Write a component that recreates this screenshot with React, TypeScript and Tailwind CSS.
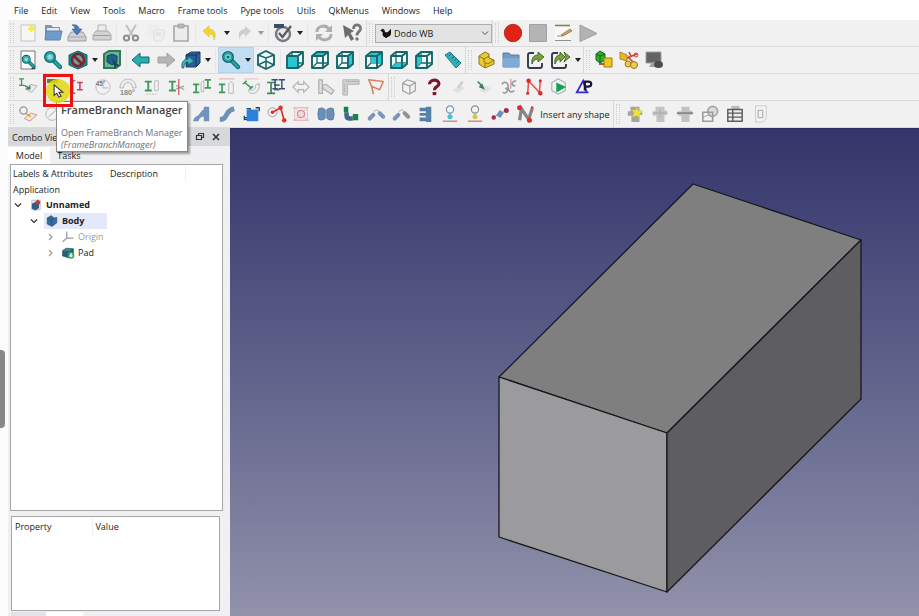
import { Fragment, type ReactNode } from "react";

const TEAL = "#14686a";
const CYAN = "#2cc3d2";

function Svg({ children, size = "size-5" }: { children: ReactNode; size?: string }) {
  return (
    <svg viewBox="0 0 20 20" className={`${size} shrink-0 overflow-visible`} fill="none" aria-hidden="true">
      {children}
    </svg>
  );
}

const cubeFaces: Record<string, string> = {
  front: "M2 6H13V18H2Z",
  top: "M2 6L7 2H18L13 6Z",
  right: "M13 6L18 2V14L13 18Z",
  rear: "M7 2H18V14H7Z",
  bottom: "M2 18L7 13H18L13 18Z",
  left: "M2 6L7 2V13L2 18Z",
};

function Cube({ face }: { face: string }) {
  return (
    <Svg>
      <path d="M2 6L7 2H18V14L13 18H2Z" fill="#f4fbfb" />
      <path d="M7 2V13L2 18M7 13H18" stroke={TEAL} strokeWidth="1.3" />
      <path d={cubeFaces[face]} fill={CYAN} />
      <path d="M2 6L7 2H18V14L13 18H2ZM2 6H13V18M13 6L18 2" stroke={TEAL} strokeWidth="1.9" strokeLinejoin="round" />
    </Svg>
  );
}

function Magnifier({ x = 0, y = 0, s = 1 }: { x?: number; y?: number; s?: number }) {
  return (
    <g transform={`translate(${x} ${y}) scale(${s})`}>
      <path d="M10 10L17 17" stroke={TEAL} strokeWidth="4.5" strokeLinecap="round" />
      <path d="M10 10L17 17" stroke="#1fa3a8" strokeWidth="2.5" strokeLinecap="round" />
      <circle cx="7" cy="7" r="5.2" fill="#8ed6da" stroke={TEAL} strokeWidth="1.6" />
      <circle cx="7" cy="7" r="3.6" stroke="#1fa3a8" strokeWidth="1.6" />
    </g>
  );
}

function Beam({ x, y, c = "#3e9a5c", s = 1 }: { x: number; y: number; c?: string; s?: number }) {
  return (
    <path transform={`translate(${x} ${y}) scale(${s})`} d="M0 0H7M3.5 0V9M0 9H7" stroke={c} strokeWidth="1.9" />
  );
}

const icons: Record<string, ReactNode> = {
  New: (
    <Svg>
      <path d="M3 2H17V18H3Z" fill="#f6f6f4" stroke="#c2c2c0" />
      <path d="M13 1L14.3 3.7L18 3L15.8 5.5L18 8L14.5 7.4L13 10L12 7L9 6L11.6 4.5Z" fill="#f3ee3c" />
    </Svg>
  ),
  Open: (
    <Svg>
      <path d="M2 2H8L10 4H17V15H2Z" fill="#7f95ad" />
      <path d="M4 5H16V8H4Z" fill="#e6eaee" />
      <path d="M3 8H19L17 17H2Z" fill="#6f9bcc" stroke="#5b84b2" />
    </Svg>
  ),
  Save: (
    <Svg>
      <path d="M4 9H16L19 14V18H1V14Z" fill="#d0d2d4" stroke="#9a9da1" />
      <path d="M2 14H18" stroke="#a5a8ac" />
      <path d="M5 2C9 1 12 3 12 6H15L10 12L5 6H8C8 4 7 3 5 2Z" fill="#4d78b4" stroke="#335a90" strokeWidth=".6" />
    </Svg>
  ),
  Print: (
    <Svg>
      <path d="M6 2H14V9H6Z" fill="#ededed" stroke="#b5b5b5" />
      <path d="M4 8H16L19 12V17H1V12Z" fill="#d2d2d2" stroke="#a9a9a9" />
      <path d="M2 12.5H18" stroke="#9d9d9d" />
    </Svg>
  ),
  Cut: (
    <Svg>
      <path d="M5 2L12 13M15 2L8 13" stroke="#c0c0c0" strokeWidth="2" />
      <circle cx="5.500" cy="15" r="2.600" stroke="#8e8e8e" strokeWidth="2" />
      <circle cx="14.500" cy="15" r="2.600" stroke="#8e8e8e" strokeWidth="2" />
    </Svg>
  ),
  Copy: (
    <Svg>
      <path d="M3 3H13V14H3Z" fill="#eeeeee" stroke="#ebebeb" />
      <path d="M8 7H18V14L15 18H8Z" fill="#efefef" stroke="#dedede" />
      <path d="M10 10H15M10 12H15" stroke="#dadada" />
    </Svg>
  ),
  Paste: (
    <Svg>
      <path d="M3 3H17V18H3Z" fill="#ececec" stroke="#a8a8a8" strokeWidth="1.6" />
      <path d="M7 1H13V5H7Z" fill="#b9b9b9" stroke="#999" strokeWidth=".7" />
    </Svg>
  ),
  Undo: (
    <Svg>
      <path d="M3 8L9 3V6C14 6 17 10 14 17C14 12 12 11 9 11V14Z" fill="#edd735" stroke="#d7bd29" strokeWidth=".6" />
    </Svg>
  ),
  Redo: (
    <Svg>
      <path d="M17 8L11 3V6C6 6 3 10 6 17C6 12 8 11 11 11V14Z" fill="#cfcfcf" />
    </Svg>
  ),
  "Edit mode": (
    <Svg>
      <circle cx="10" cy="11" r="7" fill="#e9e9e9" stroke="#777b80" strokeWidth="2.4" />
      <path d="M1 1H11V5H1Z" fill="#3a4b70" />
      <path d="M6 10L9.5 14L18 3" stroke="#555a60" strokeWidth="2.2" />
    </Svg>
  ),
  Refresh: (
    <Svg>
      <path d="M3 9C3 3 11 1 15 6M17 11C17 17 9 19 5 14" stroke="#aeaeae" strokeWidth="3" />
      <path d="M18 2V9H11ZM2 18V11H9Z" fill="#aeaeae" />
    </Svg>
  ),
  "What's this": (
    <Svg>
      <path d="M1 2L12 8L8.500 10L12 16L9 18L6 12L3 15Z" fill="#6c6c6c" />
      <path d="M11.500 6C11.500 0 19 1 18.500 6C18 9 15 8.500 15 12.500" stroke="#777" strokeWidth="2.8" />
      <circle cx="15" cy="16" r="1.700" fill="#777" />
    </Svg>
  ),
  Record: (
    <Svg>
      <circle cx="10" cy="10" r="8.700" fill="#e02416" stroke="#a51c12" strokeWidth=".8" />
    </Svg>
  ),
  Stop: (
    <Svg>
      <path d="M1.500 1.500H18.500V18.500H1.500Z" fill="#b4b4b4" stroke="#a2a2a2" />
    </Svg>
  ),
  Macros: (
    <Svg>
      <path d="M2 2H17V17H2Z" fill="#f8f8f6" />
      <path d="M2 2.500H17" stroke="#7e8543" strokeWidth="1.600" />
      <path d="M2 17.500H18M4 13H9" stroke="#929292" />
      <path d="M8 12L17 6L19 8L10 13Z" fill="#cfa35a" stroke="#6d5b40" strokeWidth=".6" />
    </Svg>
  ),
  Execute: (
    <Svg>
      <path d="M2 2L19 10.500L2 18.500Z" fill="#b3b3b3" stroke="#9c9c9c" />
    </Svg>
  ),
  "Fit all": (
    <Svg>
      <path d="M3 1H17V19H3Z" fill="#fafafa" stroke="#777" />
      <path d="M13 19L17 15V19Z" fill="#333" />
      <Magnifier x={3} y={4} s={0.75} />
    </Svg>
  ),
  "Fit selection": (
    <Svg>
      <Magnifier />
    </Svg>
  ),
  "Draw style": (
    <Svg>
      <path d="M10 1L19 5V15L10 19L1 15V5Z" fill="#16868a" stroke={TEAL} />
      <circle cx="10" cy="10" r="6" fill="#7e9798" stroke="#7d2630" strokeWidth="2.600" />
      <path d="M6 6L14 14" stroke="#7d2630" strokeWidth="2.600" />
    </Svg>
  ),
  "Box selection": (
    <Svg>
      <path d="M2 4L7 1H18V15L14 18H2Z" fill="#6eb49a" stroke="#2d7b51" strokeWidth="2" />
      <path d="M5 6L10 4L15 6V12L10 15L5 12Z" fill="#1c6189" stroke="#174b62" />
      <path d="M10 9L18 16L14.500 16L13 19Z" fill="#214458" />
    </Svg>
  ),
  Back: (
    <Svg>
      <path d="M1 10L9 3V7H18V13H9V17Z" fill="#24aeb4" stroke={TEAL} />
    </Svg>
  ),
  Forward: (
    <Svg>
      <path d="M19 10L11 3V7H2V13H11V17Z" fill="#b5b5b5" stroke="#a2a2a2" />
    </Svg>
  ),
  "Linked object": (
    <Svg>
      <path d="M5 5L10 2H19V13L15 17H5Z" fill="#285f9e" stroke="#243d5e" />
      <path d="M5 5H15V16M15 5L19 2" stroke="#173553" />
      <path d="M1 18C0 12 3 9 7 9V6L13 11L7 15V12C4 12 3 14 3 18Z" fill="#43b4c2" stroke="#174b62" strokeWidth=".7" />
    </Svg>
  ),
  Zoom: (
    <Svg>
      <Magnifier />
      <circle cx="7" cy="7" r="1.500" fill={TEAL} />
    </Svg>
  ),
  Isometric: (
    <Svg>
      <path d="M10 1L18 5V15L10 19L2 15V5Z" fill="#f4fbfb" stroke={TEAL} strokeWidth="1.900" />
      <path d="M2 5L10 8L18 5M10 8V19M2 15L10 11L18 15" stroke={TEAL} strokeWidth="1.500" />
    </Svg>
  ),
  Front: <Cube face="front" />,
  Top: <Cube face="top" />,
  Right: <Cube face="right" />,
  Rear: <Cube face="rear" />,
  Bottom: <Cube face="bottom" />,
  Left: <Cube face="left" />,
  Measure: (
    <Svg>
      <path d="M2 5L7 2L18 13L13 18Z" fill="#35aebc" stroke="#1c7b86" />
      <path d="M8 4L6 6M11 6.500L8.500 8.500M13.500 8.500L11.500 10.500M16 11L13.500 13.500" stroke="#155c66" />
    </Svg>
  ),
  Part: (
    <Svg>
      <path d="M3 6L9 2L13 4V8L18 10V14L9 18L3 14Z" fill="#ecc92c" stroke="#8b741a" />
      <path d="M3 6L8 9V12L12 14L18 10M8 9L13 6M9 18V13" stroke="#8b741a" />
    </Svg>
  ),
  Group: (
    <Svg>
      <path d="M2 3H8L10 5H18V17H2Z" fill="#7799be" stroke="#5f7e9f" />
      <path d="M2 8H18V17H2Z" fill="#7ea9d8" />
    </Svg>
  ),
  "Make link": (
    <Svg>
      <path d="M8 3H4Q2 3 2 5V16Q2 18 4 18H14Q16 18 16 16V13" stroke="#2e3b48" strokeWidth="1.900" />
      <path d="M6 14C5 8 8 5 12 5V2L18 7L12 12V9C9 9 7 11 6 14Z" fill="#77a43c" stroke="#35531c" strokeWidth=".8" />
    </Svg>
  ),
  "Make sublink": (
    <Svg>
      <path d="M7 3H3Q1 3 1 5V16Q1 18 3 18H13Q15 18 15 16V14" stroke="#2e3b48" strokeWidth="1.900" />
      <path d="M4 14C3 8 6 5 9 5V2L14 7L9 12V9C7 9 5 11 4 14ZM13 2L19 7L13 12L15 7Z" fill="#77a43c" stroke="#35531c" strokeWidth=".8" />
    </Svg>
  ),
  "Align view": (
    <Svg>
      <path d="M2 4L6 1L11 4V10L6 13L2 10Z" fill="#2bb02d" stroke="#156218" />
      <path d="M2 4L6 6L11 4M6 6V13" stroke="#156218" />
      <path d="M10 8H18V17H10Z" fill="#efc71e" stroke="#a47d10" />
      <path d="M5 14H10" stroke="#b52a1d" strokeWidth="1.600" />
    </Svg>
  ),
  "Toggle part": (
    <Svg>
      <path d="M1 2L8 5L8 11L1 9Z" fill="#e4b82c" stroke="#b78818" />
      <path d="M8 8L18 4M9 7L16 14M10 2L12 6" stroke="#c9443a" strokeWidth="1.600" />
      <circle cx="9" cy="14" r="3" fill="#e8ca54" stroke="#a27618" />
      <circle cx="15" cy="15" r="3.500" fill="#e8ca54" stroke="#a27618" />
      <circle cx="17" cy="5" r="2" stroke="#c9443a" />
    </Svg>
  ),
  Screen: (
    <Svg>
      <path d="M2 2H17V13H2Z" fill="#636363" stroke="#a0a0a0" />
      <path d="M5 17L8 12H12L13 17Z" fill="#a0a0a0" />
      <ellipse cx="14.500" cy="14.500" rx="4.500" ry="3.500" fill="#4e4e4e" />
    </Svg>
  ),
  "Insert path": (
    <Svg size="size-[18px]">
      <Beam x={0} y={1} s={0.8} />
      <path d="M7 12L13 7L20 9L14 16Z" fill="#ececec" stroke="#a9a9a9" />
      <path d="M6 8L12 12M12 8.500V12H8" stroke="#357a48" strokeWidth="1.500" />
    </Svg>
  ),
  "FrameBranch Manager": (
    <Svg>
      <path d="M4 2H15V6H4Z" fill="#6a7c45" />
    </Svg>
  ),
  "Fill frame": (
    <Svg size="size-[18px]">
      <path d="M7 3H4V17H7" stroke="#6670b5" strokeWidth="1.800" />
      <Beam x={9} y={5} c="#ce3e5c" s={0.9} />
    </Svg>
  ),
  "Turn 45": (
    <Svg size="size-[18px]">
      <circle cx="10" cy="10" r="8" stroke="#bdbdbd" />
      <path d="M10 11V4M10 11H16" stroke="#b0b0b0" />
      <text x="2" y="9" fontSize="7" fontWeight="700" fill="#777" className="font-['Liberation_Sans',sans-serif]">45°</text>
    </Svg>
  ),
  "Turn 180": (
    <Svg size="size-[18px]">
      <path d="M1 11C1 -2 19 -2 19 11H15C15 3 5 3 5 11Z" fill="#ececec" stroke="#b5b5b5" />
      <text x="1" y="19" fontSize="8" fontWeight="700" fill="#888" className="font-['Liberation_Sans',sans-serif]">180°</text>
    </Svg>
  ),
  "Shift beam": (
    <Svg size="size-[18px]">
      <Beam x={2} y={4} s={1.1} />
      <path d="M13 14V3H17V14Z" stroke="#b9b9b9" />
      <path d="M4 18H16" stroke="#b9b9b9" strokeDasharray="2 1" />
    </Svg>
  ),
  "Pivot beam": (
    <Svg size="size-[18px]">
      <Beam x={1} y={4} s={1.1} />
      <path d="M9 8L18 13M9 12L18 9" stroke="#9aab9e" strokeWidth="1.400" />
      <path d="M12 1V19" stroke="#d34c58" strokeWidth="1.300" />
    </Svg>
  ),
  "Level beam": (
    <Svg size="size-[18px]">
      <Beam x={0} y={7} />
      <Beam x={13} y={2} />
      <path d="M9 15V5L12 3V15Z" stroke="#b4b4b4" />
    </Svg>
  ),
  "Align edge": (
    <Svg size="size-[18px]">
      <path d="M1 1H18" stroke="#e0a3a9" />
      <Beam x={1} y={7} />
      <path d="M12 17V6L14 4L17 6V17Z" stroke="#b4b4b4" />
    </Svg>
  ),
  "Rotate edge": (
    <Svg size="size-[18px]">
      <path d="M1 1H18" stroke="#e8b9bd" />
      <path d="M2 5L9 11M0 7L4 3M7 13L11 9" stroke="#3e9a5c" strokeWidth="1.8" />
      <path d="M18 6C19 14 14 18 9 17C5 16 5 12 8 13C11 15 14 12 14 8Z" fill="#f1f1f1" stroke="#aaa" />
    </Svg>
  ),
  "Stretch beam": (
    <Svg size="size-[18px]">
      <path d="M0 5H9M4.500 5V17M0 17H9M8 8H14M8 13H14" stroke="#40845a" strokeWidth="1.900" />
      <path d="M5 2H12M13 2H20M16.500 2V12M13 12H20M9 2V12M6 12H12" stroke="#394b76" strokeWidth="1.600" />
    </Svg>
  ),
  Extend: (
    <Svg size="size-[18px]">
      <path d="M1 10L7 4V7H13V4L19 10L13 16V13H7V16Z" fill="#f0f0f0" stroke="#b4b4b4" strokeWidth="1.300" />
    </Svg>
  ),
  "Adjust angle": (
    <Svg size="size-[18px]">
      <path d="M2 2H6V17H2ZM6 8L10 7L19 14L16 18L7 12Z" fill="#dedede" stroke="#adadad" strokeWidth="1.300" />
    </Svg>
  ),
  "Adjust frame": (
    <Svg size="size-[18px]">
      <path d="M1 2H19V7H6V19H1Z" fill="#d2d2d2" stroke="#adadad" />
      <path d="M5 4H18M3 7V17" stroke="#929292" strokeDasharray="1 1" />
    </Svg>
  ),
  "Insert section": (
    <Svg size="size-[18px]">
      <path d="M2 2L18 4L14 13L5 9ZM5 9L7 18" stroke="#de7e62" strokeWidth="1.700" strokeLinejoin="round" />
    </Svg>
  ),
  "Query cube": (
    <Svg size="size-[18px]">
      <path d="M8 2L17 5V14L10 18L3 14V6Z" fill="#f2f2f2" stroke="#9e9e9e" strokeWidth="1.300" />
      <path d="M3 6L11 9L17 5M11 9V18" stroke="#9e9e9e" strokeWidth="1.300" />
    </Svg>
  ),
  Query: (
    <Svg size="size-[18px]">
      <path d="M5 7C5 1 15.500 1 15.500 6.500C15.500 10 10.500 9 10.500 13.500" stroke="#7d1630" strokeWidth="3.500" />
      <path d="M8.500 15.500H12.500V19H8.500Z" fill="#7d1630" />
    </Svg>
  ),
  "Move workplane": (
    <Svg size="size-[18px]">
      <path d="M3 14L10 8L16 11L9 17Z" fill="#e0e0e0" />
      <path d="M9 11L14 4" stroke="#cfcfcf" strokeWidth="3" />
    </Svg>
  ),
  "Rotate workplane": (
    <Svg size="size-[18px]">
      <path d="M5 14L12 8L18 12L11 17Z" fill="#e0e0e0" />
      <path d="M3 4L7 8" stroke="#3e9a5c" strokeWidth="2" />
      <path d="M8 6L11 13L4 10Z" fill="#3b7b58" />
    </Svg>
  ),
  "Offset workplane": (
    <Svg size="size-[18px]">
      <path d="M2 7C5 3 9 5 9 9C9 15 12 17 16 14M18 3C12 4 12 8 17 9M3 16C7 18 9 14 8 12" stroke="#989898" strokeWidth="1.700" />
      <path d="M12 1V12" stroke="#c47e89" />
      <path d="M5 11L10 10L8 14Z" fill="#83aa8b" />
    </Svg>
  ),
  "Hack path": (
    <Svg size="size-[18px]">
      <path d="M3 17L4 3L16 16L17 4" stroke="#dd5548" strokeWidth="1.700" />
      <circle cx="4" cy="3" r="2.500" fill="#d42f2c" />
      <circle cx="17" cy="17" r="2.500" fill="#d42f2c" />
      <circle cx="3" cy="17" r="1.700" fill="#d42f2c" />
      <circle cx="17" cy="3" r="1.700" fill="#d42f2c" />
    </Svg>
  ),
  "Point to point": (
    <Svg size="size-[18px]">
      <path d="M9 1L17 5V14L9 18L2 14V5Z" stroke="#a7b3ad" strokeWidth="1.300" />
      <path d="M7 5L18 10L7 16Z" fill="#13a15a" />
    </Svg>
  ),
  "Pressure loss": (
    <Svg size="size-[18px]">
      <path d="M2 16H13L9 3ZM1 16H15" stroke="#332bd1" strokeWidth="2" />
      <path d="M11 14V4H15C19 4 19 9.500 15 9.500H12" stroke="#171438" strokeWidth="2.500" />
    </Svg>
  ),
  "Insert pipe line": (
    <Svg size="size-[18px]">
      <circle cx="5" cy="6" r="4" stroke="#999" strokeWidth="1.500" />
      <path d="M6 15L13 9L20 11L12 18Z" fill="#f3e6d0" stroke="#c1909a" />
      <path d="M7 9L13 13" stroke="#df9b3d" strokeWidth="1.800" />
    </Svg>
  ),
  Pipe: (
    <Svg size="size-[18px]">
      <circle cx="9" cy="10" r="7" stroke="#b0b0b0" />
      <path d="M5 13L13 6" stroke="#a0a0a0" />
    </Svg>
  ),
  Tee: (
    <Svg size="size-[18px]">
      <path d="M12 2H18V18H12V13C8 13 7 15 6 18H0C1 14 3 13 5 12C8 10 9 6 12 5Z" fill="#7093be" />
    </Svg>
  ),
  Elbow: (
    <Svg size="size-[18px]">
      <path d="M2 16C7 16 8 14 10 10C12 6 14 5 18 4" stroke="#6f91b9" strokeWidth="5.500" />
    </Svg>
  ),
  Tank: (
    <Svg size="size-[18px]">
      <path d="M4 4H8V6M14 3H18V7M1 14H5M1.500 12V17M1 16H6" stroke="#25415e" strokeWidth="1.500" />
      <path d="M4 5H17V18H4Z" fill="#2c81dd" />
    </Svg>
  ),
  Route: (
    <Svg size="size-[18px]">
      <circle cx="5" cy="8" r="5" stroke="#999" />
      <path d="M5 8L14 3L18 17" stroke="#dc3330" strokeWidth="1.900" />
      <circle cx="5" cy="8" r="2" fill="#dc3330" />
      <circle cx="14" cy="3" r="2.500" fill="#dc3330" />
      <circle cx="18" cy="17" r="2.500" fill="#dc3330" />
    </Svg>
  ),
  Flange: (
    <Svg size="size-[18px]">
      <path d="M3 3H17V17H3ZM3 3L17 17M17 3L3 17M1 3H19M1 17H19" stroke="#e6b4b8" />
      <circle cx="10" cy="10" r="4" fill="#f3dbdd" stroke="#dd8a92" strokeWidth="1.500" />
    </Svg>
  ),
  Union: (
    <Svg size="size-[18px]">
      <path d="M2 4Q6 2 9 5V15Q5 18 2 16Q0 10 2 4ZM11 5Q15 2 18 4Q20 10 18 16Q15 18 11 15Z" fill="#6c8fba" stroke="#55799f" />
      <path d="M9 6H11V14H9Z" fill="#84a2c6" />
    </Svg>
  ),
  "Mate elbow": (
    <Svg size="size-[18px]">
      <path d="M5 8V11Q5 15 9 15H12" stroke="#3f678e" strokeWidth="5" />
      <path d="M2 2H7V8H2ZM12 10H18V17H12Z" fill="#168444" />
    </Svg>
  ),
  "Reducer arc": (
    <Svg size="size-[18px]">
      <path d="M3 15L7 11M14 9L18 13" stroke="#7a95b8" strokeWidth="4.500" strokeLinecap="round" />
      <path d="M7 8Q11 3 14 8" stroke="#a8a8a8" />
    </Svg>
  ),
  "Parallel arc": (
    <Svg size="size-[18px]">
      <path d="M3 15L7 11" stroke="#7a95b8" strokeWidth="4.500" strokeLinecap="round" />
      <path d="M14 9L18 13" stroke="#9a8d94" strokeWidth="4.500" strokeLinecap="round" />
      <path d="M7 8Q11 3 14 8" stroke="#a8a8a8" />
    </Svg>
  ),
  Manifold: (
    <Svg size="size-[18px]">
      <path d="M11 2H17V19H11ZM4 3H11V7H4ZM4 9H11V12H4ZM4 14H11V18H4Z" fill="#5681a9" />
    </Svg>
  ),
  "Attach low": (
    <Svg size="size-[18px]">
      <circle cx="10" cy="5" r="4" fill="#eef5fa" stroke="#8190ab" strokeWidth="1.300" />
      <path d="M10 9V14" stroke="#8190ab" />
      <circle cx="10" cy="13" r="2.800" fill="#35cbd5" />
      <path d="M2 18H18" stroke="#d98978" strokeWidth="1.600" />
    </Svg>
  ),
  "Attach high": (
    <Svg size="size-[18px]">
      <circle cx="10" cy="5" r="4" fill="#eef5fa" stroke="#8c8e90" strokeWidth="1.300" />
      <path d="M10 9V14" stroke="#8c8e90" />
      <circle cx="10" cy="13" r="2.800" fill="#d7c650" />
      <path d="M2 18H18" stroke="#d98978" strokeWidth="1.600" />
    </Svg>
  ),
  "Pipe segment": (
    <Svg size="size-[18px]">
      <path d="M2 14L17 6" stroke="#8c8b9c" />
      <path d="M8 13L12 7" stroke="#6c8fba" strokeWidth="5.500" />
      <circle cx="3" cy="14" r="2.500" fill="#a02f4b" />
      <circle cx="17" cy="6" r="2.800" fill="#a02f4b" />
    </Svg>
  ),
  "Pipe path": (
    <Svg size="size-[18px]">
      <path d="M4 17L6 4L14 16L18 4" stroke="#858585" strokeWidth="3.600" />
      <circle cx="4" cy="3" r="2.800" fill="#d9312b" />
      <circle cx="15" cy="17" r="2.800" fill="#d9312b" />
      <circle cx="18" cy="3" r="1.500" fill="#d9312b" />
    </Svg>
  ),
  "Create sheet": (
    <Svg size="size-[18px]">
      <path d="M5 2H15V6H18V11H15V19H6V12H2V7H5Z" fill="#a5a5a0" />
      <path d="M12 2L13.500 6.500L19 6L15 10L16 14L12 12L7 13L9 9L7 5L11 6Z" fill="#efe52c" />
    </Svg>
  ),
  "Add column": (
    <Svg size="size-[18px]">
      <path d="M5 2H15V6H18V11H15V19H6V12H2V7H5Z" fill="#c4c4c4" />
      <path d="M2 9H18M10 5V14" stroke="#b3b3b3" strokeWidth="1.800" />
    </Svg>
  ),
  "Remove column": (
    <Svg size="size-[18px]">
      <path d="M6 2H15V6H18V11H15V19H6V12H2V7H6Z" fill="#c2c2c2" />
      <path d="M1 9H19" stroke="#898989" strokeWidth="2" />
    </Svg>
  ),
  Shapes: (
    <Svg size="size-[18px]">
      <circle cx="13" cy="7" r="5.500" fill="#dcdcdc" stroke="#a5a5a5" strokeWidth="1.800" />
      <path d="M2 8H13V18H2Z" stroke="#9b9b9b" strokeWidth="1.800" />
      <path d="M2 14L8 11L13 14" stroke="#9b9b9b" />
    </Svg>
  ),
  Spreadsheet: (
    <Svg size="size-[18px]">
      <path d="M6 1H15V5H6Z" fill="#bcbcbc" />
      <path d="M2 5H18V18H2ZM2 9H18M2 13.500H18M7.500 5V18" stroke="#5c5c5c" strokeWidth="1.600" fill="#efefef" />
    </Svg>
  ),
  Document: (
    <Svg size="size-[18px]">
      <path d="M5 1H17V15L13 19H5Z" fill="#f3f3f3" stroke="#c6c6c6" />
      <path d="M8 6H13V14H8Z" stroke="#b3b3b3" strokeWidth="1.400" />
    </Svg>
  ),
};

function Tool({ name, className = "w-6" }: { name: string; className?: string }) {
  return (
    <button type="button" aria-label={name} className={`flex h-6 items-center justify-center ${className}`}>
      {icons[name]}
    </button>
  );
}

function Group({ names, className }: { names: string[]; className: string }) {
  return (
    <div className={`flex shrink-0 ${className}`}>
      {names.map((n) => (
        <Tool key={n} name={n} className="min-w-0 flex-1" />
      ))}
    </div>
  );
}

function Arrow({ label, dim = false }: { label: string; dim?: boolean }) {
  return (
    <button type="button" aria-label={label} className="flex h-6 w-[10px] shrink-0 items-center justify-center">
      <svg viewBox="0 0 6 4" className="h-1 w-[6px]" aria-hidden="true">
        <path d="M0 0H6L3 4Z" fill={dim ? "#9a9a9a" : "#222"} />
      </svg>
    </button>
  );
}

function Grip() {
  return (
    <div className="flex w-2 shrink-0 justify-center">
      <div className="h-5 w-1 border-x border-dotted border-[#cdcdcd]" />
    </div>
  );
}

function Sep() {
  return (
    <div className="flex w-[5px] shrink-0 justify-center">
      <div className="h-5 w-px bg-[#e6e6e8]" />
    </div>
  );
}

function Edge() {
  return <div className="h-[26px] w-px shrink-0 bg-[#d8d8da]" />;
}

function Bar({ label, children }: { label: string; children: ReactNode }) {
  return (
    <div role="toolbar" aria-label={label} className="flex h-[27px] items-center border-b border-[#dadadc] bg-[#f1f1f2]">
      {children}
    </div>
  );
}

const menus = ["File", "Edit", "View", "Tools", "Macro", "Frame tools", "Pype tools", "Utils", "QkMenus", "Windows", "Help"];

const frameTools = [
  "Insert path", "FrameBranch Manager", "Fill frame", "Turn 45", "Turn 180", "Shift beam", "Pivot beam", "Level beam",
  "Align edge", "Rotate edge", "Stretch beam", "Extend", "Adjust angle", "Adjust frame", "Insert section",
];
const utilTools = [
  "Query cube", "Query", "Move workplane", "Rotate workplane", "Offset workplane", "Hack path", "Point to point", "Pressure loss",
];
const pipeTools = [
  "Insert pipe line", "Pipe", "", "", "", "", "", "Tee", "Elbow", "Tank", "Route", "Flange", "Union", "Mate elbow",
  "Reducer arc", "Parallel arc", "Manifold", "Attach low", "Attach high", "Pipe segment", "Pipe path",
];

function Chevron({ open }: { open: boolean }) {
  return (
    <svg viewBox="0 0 8 8" className="size-2 shrink-0" fill="none" aria-hidden="true">
      <path d={open ? "M1 2.500L4 5.500L7 2.500" : "M3 1L6 4L3 7"} stroke={open ? "#333" : "#9a9a9a"} strokeWidth="1.200" />
    </svg>
  );
}

function Tooltip() {
  return (
    <div
      role="tooltip"
      className="absolute top-[101px] left-[56px] z-10 h-[51px] w-[132px] border border-[#8a8a8a] bg-white pl-1 whitespace-nowrap text-[#707070] shadow-[2px_2px_2px_rgba(0,0,0,0.35)]"
    >
      <div className="text-[11px] leading-4 font-semibold text-[#444]">FrameBranch Manager</div>
      <div className="mt-2 leading-[14px]">Open FrameBranch Manager</div>
      <div className="leading-[10px] italic">(FrameBranchManager)</div>
    </div>
  );
}

function Highlight() {
  return (
    <div className="absolute top-[74px] left-[43px] z-20 flex h-[33px] w-[30px] items-center justify-center border-[3px] border-[#ee1111]">
      <div className="absolute size-6 rounded-full bg-[#e2d80e]/85" />
      <svg viewBox="0 0 12 16" className="relative h-[14px] w-[11px]" aria-hidden="true">
        <path d="M1 1V13L4 10.500L6.500 15L9 14L6.500 9.500H11Z" fill="#fff" stroke="#333" strokeWidth="1.200" />
      </svg>
    </div>
  );
}

function ComboView() {
  return (
    <aside className="flex w-[222px] shrink-0 flex-col bg-[#f0f0f2]">
      <div className="flex h-[18px] items-center justify-between bg-[#d7d8da] pr-2 pl-1">
        <h2>Combo View</h2>
        <div className="flex items-center gap-1">
          <button type="button" aria-label="Float panel" className="size-3">
            <svg viewBox="0 0 12 12" fill="none" className="size-3" aria-hidden="true">
              <path d="M4.500 2.500H9.500V6.500H7.500M4.500 2.500V4.500M2.500 4.500H7.500V8.500H2.500Z" stroke="#333" strokeWidth="1.200" />
            </svg>
          </button>
          <button type="button" aria-label="Close panel" className="size-3">
            <svg viewBox="0 0 12 12" fill="none" className="size-3" aria-hidden="true">
              <path d="M3 3L9 9M9 3L3 9" stroke="#333" strokeWidth="1.600" />
            </svg>
          </button>
        </div>
      </div>
      <div role="tablist" className="flex h-[18px] items-end">
        <button type="button" role="tab" aria-selected="true" className="h-[17px] w-[42px] bg-white">Model</button>
        <button type="button" role="tab" aria-selected="false" className="h-[17px] w-[38px]">Tasks</button>
      </div>
      <div className="mr-[7px] ml-[2px] flex-1 border border-[#a6a6a8] bg-white pl-[2px]">
        <div className="flex h-[17px] items-center">
          <div className="w-[97px]">Labels &amp; Attributes</div>
          <div className="h-[15px] w-[76px] border-r border-[#f0f0f0]">Description</div>
        </div>
        <div>Application</div>
        <ul role="tree" aria-label="Model tree" className="leading-4">
          <li role="treeitem" className="flex h-4 items-center pl-px font-bold text-[#222]">
            <Chevron open />
            <span className="ml-2 flex items-center gap-1">
              <Svg size="size-3">
                <path d="M3 2H17V18H3Z" fill="#e4e8ef" stroke="#9aa5b5" />
                <path d="M3 8L9 5L15 8V15L9 19L3 16Z" fill="#2e5c86" />
                <path d="M9 4L13 1L17 4V8L13 10L9 8Z" fill="#c43a35" />
              </Svg>
              Unnamed
            </span>
          </li>
          <li role="treeitem" className="flex h-4 items-center pl-[17px] font-bold text-[#222]">
            <Chevron open />
            <span className="ml-[6px] flex w-[63px] items-center gap-1 bg-[#e4e8fb] pl-[2px]">
              <Svg size="size-3">
                <path d="M2 5L9 1L13 5L18 4V13L10 19L2 15Z" fill="#386c9d" stroke="#204867" />
                <path d="M2 5L9 8L13 5M9 8V17" stroke="#204867" />
              </Svg>
              Body
            </span>
          </li>
          <li role="treeitem" className="flex h-4 items-center pl-[33px] text-[#9a9a9a]">
            <Chevron open={false} />
            <span className="ml-2 flex items-center gap-1">
              <Svg size="size-3">
                <path d="M8 1V12L1 18M8 12H19" stroke="#999" strokeWidth="2" />
              </Svg>
              Origin
            </span>
          </li>
          <li role="treeitem" className="flex h-4 items-center pl-[33px]">
            <Chevron open={false} />
            <span className="ml-2 flex items-center gap-1">
              <Svg size="size-3">
                <path d="M1 6L7 2L19 3V14L11 18L1 15Z" fill="#245e83" stroke="#1d4055" />
                <path d="M2 6L7 2L18 3L12 7Z" fill="#2f8f86" />
                <path d="M2 7H6" stroke="#c0473f" strokeWidth="2" />
                <circle cx="15" cy="14" r="5.500" fill="#34a366" />
                <path d="M15 9L18 15Q15 19 12 15Z" fill="#e9f4ec" />
              </Svg>
              Pad
            </span>
          </li>
        </ul>
      </div>
      <div className="mt-[5px] mr-[10px] ml-[3px] h-[95px] border border-[#a6a6a8] bg-white">
        <table className="w-full table-fixed text-left">
          <thead>
            <tr className="h-[18px]">
              <th className="w-20 border-r border-[#efefef] pl-[3px] font-normal">Property</th>
              <th className="pl-[3px] font-normal">Value</th>
            </tr>
          </thead>
        </table>
      </div>
      <div className="mt-px flex h-1 pl-[3px]">
        <div className="w-[35px] bg-[#e3e3e5]" />
        <div className="w-[37px] bg-white" />
      </div>
    </aside>
  );
}

function Viewport() {
  return (
    <main className="min-w-0 flex-1 border-t border-[#2b2b5e] bg-linear-to-b from-[#34346a] to-[#9292ab]">
      <svg viewBox="0 0 689 487" className="size-full" role="img" aria-label="Pad solid in perspective" fill="none">
        <g stroke="#17171f" strokeWidth="1.300" strokeLinejoin="round">
          <path d="M463 55L631 111L437 304L269 248Z" fill="#7f7f7f" />
          <path d="M269 248L437 304V463L269 408Z" fill="#9b9a9c" />
          <path d="M437 304L631 111V270L437 463Z" fill="#5e5d5f" />
        </g>
      </svg>
    </main>
  );
}

export default function App() {
  return (
    <div className="relative flex h-screen min-h-[400px] flex-col overflow-hidden bg-[#fcfcfd] pl-2 font-['Open_Sans','Noto_Sans',sans-serif] text-[9px] leading-[15px] text-[#1a1a1a]">
      <nav aria-label="Main menu" className="flex h-5 shrink-0 items-center gap-px bg-white pt-px">
        {menus.map((m) => (
          <button key={m} type="button" className="px-[6px]">{m}</button>
        ))}
      </nav>
      <div className="shrink-0">
        <Bar label="File">
          <Grip />
          <Group className="w-[98px]" names={["New", "Open", "Save", "Print"]} />
          <Sep />
          <Group className="w-[74px]" names={["Cut", "Copy", "Paste"]} />
          <Sep />
          <Tool name="Undo" />
          <Arrow label="Undo history" />
          <Tool name="Redo" />
          <Arrow label="Redo history" dim />
          <Sep />
          <Tool name="Edit mode" />
          <Arrow label="Edit mode options" />
          <Sep />
          <Group className="w-[56px]" names={["Refresh", "What's this"]} />
          <Edge />
          <Grip />
          <div className="relative flex shrink-0 items-center">
            <select
              aria-label="Workbench"
              className="h-[19px] w-[117px] appearance-none border border-[#adadad] bg-[#e3e3e3] pl-[18px]"
            >
              <option>Dodo WB</option>
            </select>
            <svg viewBox="0 0 14 12" className="pointer-events-none absolute left-[5px] h-[10px] w-3" aria-hidden="true">
              <path d="M0 3L3 1L5 2L6 5L9 5L13 1L13 7Q12 11 8 11V12H6V11Q2 10 3 5Z" fill="#111" />
            </svg>
            <svg viewBox="0 0 8 8" className="pointer-events-none absolute right-[3px] size-2" fill="none" aria-hidden="true">
              <path d="M1 2.500L4 5.500L7 2.500" stroke="#555" />
            </svg>
          </div>
          <Edge />
          <Grip />
          <Group className="w-[99px]" names={["Record", "Stop", "Macros", "Execute"]} />
        </Bar>
        <Bar label="View">
          <Grip />
          <Group className="w-[74px]" names={["Fit all", "Fit selection", "Draw style"]} />
          <Arrow label="Draw style options" />
          <Tool name="Box selection" />
          <Sep />
          <Group className="w-[74px]" names={["Back", "Forward", "Linked object"]} />
          <Arrow label="Linked object options" />
          <Sep />
          <div className="flex shrink-0 border border-[#b5d3ec] bg-[#c3ddf2]">
            <Tool name="Zoom" />
            <Arrow label="Zoom options" />
          </div>
          <Tool name="Isometric" />
          <Sep />
          <Group className="w-[74px]" names={["Front", "Top", "Right"]} />
          <Sep />
          <Group className="w-[74px]" names={["Rear", "Bottom", "Left"]} />
          <Sep />
          <Tool name="Measure" />
          <Edge />
          <Grip />
          <Group className="w-[99px]" names={["Part", "Group", "Make link", "Make sublink"]} />
          <Arrow label="Link options" />
          <Edge />
          <Grip />
          <Group className="w-[74px]" names={["Align view", "Toggle part", "Screen"]} />
        </Bar>
        <Bar label="Frame">
          <Grip />
          <Group className="w-[372px]" names={frameTools} />
          <Edge />
          <Grip />
          <Group className="w-[199px]" names={utilTools} />
        </Bar>
        <Bar label="Pipe">
          <Grip />
          <div className="flex w-[521px] shrink-0">
            {pipeTools.map((n, i) => (
              <Fragment key={i}>
                {n ? <Tool name={n} className="min-w-0 flex-1" /> : <span className="flex-1" />}
              </Fragment>
            ))}
          </div>
          <button type="button" className="w-[76px] shrink-0 text-center whitespace-nowrap">Insert any shape</button>
          <Edge />
          <Grip />
          <Group
            className="w-[151px]"
            names={["Create sheet", "Add column", "Remove column", "Shapes", "Spreadsheet", "Document"]}
          />
        </Bar>
      </div>
      <div className="flex min-h-0 flex-1">
        <ComboView />
        <Viewport />
      </div>
      <Tooltip />
      <Highlight />
      <div className="absolute top-[350px] left-0 h-[78px] w-[5px] rounded-r bg-[#888]" />
    </div>
  );
}
